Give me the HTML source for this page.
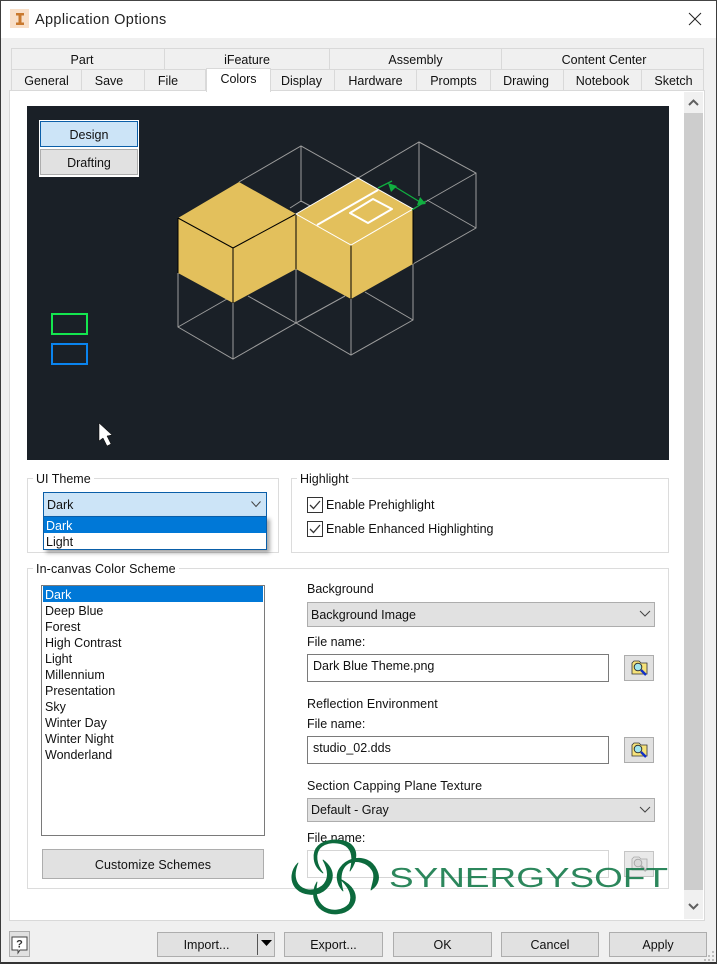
<!DOCTYPE html>
<html><head><meta charset="utf-8"><style>
html,body{margin:0;padding:0}
body{width:717px;height:964px;position:relative;overflow:hidden;background:#f0f0f0;font-family:"Liberation Sans",sans-serif;font-size:12.5px;color:#111}
div{position:absolute;box-sizing:border-box}
.t{white-space:nowrap;height:16px;line-height:16px;margin-top:1px}
.tab{border-right:1px solid #d9d9d9;text-align:center;white-space:nowrap;line-height:21px;padding-top:1px}
.b{background:#e1e1e1;border:1px solid #adadad;text-align:center;white-space:nowrap}
.g{border:1px solid #dcdcdc}
.lg{background:#fff;padding:0 3px 0 3px;height:16px;line-height:16px;white-space:nowrap}
.in{background:#fff;border:1px solid #7a7a7a}
.cb{background:#fff;border:1px solid #333;width:16px;height:16px}
</style></head><body>
<!-- window -->
<div style="left:0;top:0;width:717px;height:38px;background:#fff"></div>
<div style="left:35px;top:10px;font-size:14.5px;line-height:20px;letter-spacing:.35px;color:#222;white-space:nowrap">Application Options</div>
<svg style="position:absolute;left:10px;top:9px" width="20" height="20" viewBox="0 0 20 20"><rect width="19" height="19" fill="#f8dfc8"/><path d="M6 4h8v2.500h-2.500v7H14V16H6v-2.500h2.500v-7H6z" fill="#c9792e"/></svg>
<svg style="position:absolute;left:688px;top:12px" width="14" height="14" viewBox="0 0 14 14"><path d="M1 1l12 12M13 1L1 13" stroke="#222" stroke-width="1" fill="none"/></svg>
<!-- tabs upper -->
<div style="left:11px;top:48px;width:693px;height:22px;border:1px solid #d9d9d9;background:#f0f0f0"></div>
<div class="tab" style="left:12px;top:49px;width:153px;height:20px;padding-right:12px">Part</div>
<div class="tab" style="left:165px;top:49px;width:165px;height:20px">iFeature</div>
<div class="tab" style="left:330px;top:49px;width:172px;height:20px">Assembly</div>
<div class="tab" style="left:502px;top:49px;width:201px;height:20px;border-right:0;padding-left:3px">Content Center</div>
<!-- tabs lower -->
<div style="left:11px;top:70px;width:693px;height:21px;border-left:1px solid #d9d9d9;border-right:1px solid #d9d9d9;border-bottom:1px solid #d9d9d9"></div>
<div class="tab" style="left:12px;top:70px;width:70px;height:20px">General</div>
<div class="tab" style="left:82px;top:70px;width:63px;height:20px;padding-right:8px">Save</div>
<div class="tab" style="left:145px;top:70px;width:61px;height:20px;padding-right:14px">File</div>
<div class="tab" style="left:271px;top:70px;width:64px;height:20px;padding-right:2px">Display</div>
<div class="tab" style="left:335px;top:70px;width:82px;height:20px">Hardware</div>
<div class="tab" style="left:417px;top:70px;width:74px;height:20px">Prompts</div>
<div class="tab" style="left:491px;top:70px;width:73px;height:20px;padding-right:2px">Drawing</div>
<div class="tab" style="left:564px;top:70px;width:78px;height:20px">Notebook</div>
<div class="tab" style="left:642px;top:70px;width:61px;height:20px;border-right:0;padding-left:2px">Sketch</div>
<!-- panel -->
<div style="left:9px;top:90px;width:696px;height:831px;background:#fff;border:1px solid #d9d9d9"></div>
<div style="left:206px;top:68px;width:65px;height:24px;background:#fff;border:1px solid #d9d9d9;border-bottom:0;text-align:center;line-height:20px">Colors</div>
<!-- scrollbar -->
<div style="left:684px;top:92px;width:19px;height:827px;background:#f0f0f0"></div>
<div style="left:684px;top:113px;width:19px;height:777px;background:#cdcdcd"></div>
<svg style="position:absolute;left:684px;top:92px" width="19" height="21"><path d="M5 13l4.500-4.500L14 13" stroke="#606060" stroke-width="2" fill="none"/></svg>
<svg style="position:absolute;left:684px;top:897px" width="19" height="21"><path d="M5 7l4.500 4.500L14 7" stroke="#606060" stroke-width="2" fill="none"/></svg>
<!-- canvas -->
<div style="left:27px;top:106px;width:642px;height:354px;background:#1a2027"></div>
<div style="left:39px;top:120px;width:100px;height:57px;background:#fff"></div>
<div class="b" style="left:40px;top:121px;width:98px;height:26px;line-height:26px;background:#cce4f7;border:1px solid #0a5ea8">Design</div>
<div class="b" style="left:40px;top:149px;width:98px;height:26px;line-height:26px">Drafting</div>
<div style="left:51px;top:313px;width:37px;height:22px;border:2px solid #14e64f"></div>
<div style="left:51px;top:343px;width:37px;height:22px;border:2px solid #0a84ef"></div>
<svg style="position:absolute;left:0;top:0" width="717" height="964" viewBox="0 0 717 964">
<g fill="none" stroke="#9c9c9c" stroke-width="1">
<path d="M239 182L301 146L358 178L419 142L476 173V228L413 264"/>
<path d="M301 146V202M419 142V196M476 173L413 209M427 200L476 228M301 201L290 208M301 201L314 208"/>
<path d="M178 273V327L233 359L296 323L351 355L413 320V264"/>
<path d="M178 327L227 299M233 303V359M296 269V323M351 299V355M296 323L345 296M248 296L296 323M365 292L413 320"/>
</g>
<path d="M178 218L239 182L296 214L358 178L413 209V264L351 299L296 269L233 303L178 273Z" fill="#e3c05c"/>
<path d="M178 218L233 248L296 214M233 248V303M178 218V273M296 214V269M413 209V264M351 245V299" fill="none" stroke="#000" stroke-width="1"/>
<path d="M296 214L358 178L413 209L351 245Z" fill="none" stroke="#fff" stroke-width="1"/>
<path d="M317 225L378 190" stroke="#fff" stroke-width="2" fill="none"/>
<path d="M350 213L373 199L392 209L368 223Z" stroke="#fff" stroke-width="2" fill="none" stroke-linejoin="round"/>
<g stroke="#10b040" stroke-width="1.300" fill="none"><path d="M378 188L392 181M412 210L426 201M392 185L420 202"/></g>
<path d="M388 183L397 186L391 192ZM426 204L417 205L420 197Z" fill="#10b040"/>
<path d="M99 423V441L103 438L107 446L111 444L107 436L112 435Z" fill="#fff" stroke="#000" stroke-width=".5"/>
</svg>
<!-- UI theme -->
<div class="g" style="left:27px;top:478px;width:252px;height:75px"></div>
<div class="lg" style="left:33px;top:471px">UI Theme</div>
<div style="left:43px;top:492px;width:224px;height:25px;background:#cce4f7;border:1px solid #0a5ea8"></div>
<div class="t" style="left:47px;top:496px">Dark</div>
<svg style="position:absolute;left:250px;top:500px" width="12" height="9"><path d="M1.500 1.500L6 6.500L10.500 1.500" stroke="#444" fill="none"/></svg>
<div style="left:43px;top:516px;width:224px;height:34px;background:#fff;border:1px solid #0a5ea8;box-shadow:3px 3px 4px rgba(0,0,0,.35)"></div>
<div style="left:44px;top:517px;width:222px;height:16px;background:#0078d7"></div>
<div class="t" style="left:46px;top:517px;color:#fff">Dark</div>
<div class="t" style="left:46px;top:533px">Light</div>
<!-- highlight -->
<div class="g" style="left:291px;top:478px;width:378px;height:75px"></div>
<div class="lg" style="left:297px;top:471px">Highlight</div>
<div class="cb" style="left:307px;top:497px"></div>
<div class="cb" style="left:307px;top:521px"></div>
<svg style="position:absolute;left:307px;top:497px" width="16" height="40"><path d="M3 8l3.500 3.500L13 4M3 32l3.500 3.500L13 28" stroke="#333" stroke-width="1.300" fill="none"/></svg>
<div class="t" style="left:326px;top:496px">Enable Prehighlight</div>
<div class="t" style="left:326px;top:520px">Enable Enhanced Highlighting</div>
<!-- in canvas -->
<div class="g" style="left:27px;top:568px;width:642px;height:321px"></div>
<div class="lg" style="left:33px;top:561px;letter-spacing:.13px">In-canvas Color Scheme</div>
<div style="left:41px;top:585px;width:224px;height:251px;background:#fff;border:1px solid #7a7a7a"></div>
<div style="left:43px;top:586px;width:220px;height:16px;background:#0078d7"></div>
<div class="t" style="left:45px;top:586px;color:#fff">Dark</div>
<div class="t" style="left:45px;top:602px">Deep Blue</div>
<div class="t" style="left:45px;top:618px">Forest</div>
<div class="t" style="left:45px;top:634px">High Contrast</div>
<div class="t" style="left:45px;top:650px">Light</div>
<div class="t" style="left:45px;top:666px">Millennium</div>
<div class="t" style="left:45px;top:682px">Presentation</div>
<div class="t" style="left:45px;top:698px">Sky</div>
<div class="t" style="left:45px;top:714px">Winter Day</div>
<div class="t" style="left:45px;top:730px">Winter Night</div>
<div class="t" style="left:45px;top:746px">Wonderland</div>
<div class="b" style="left:42px;top:849px;width:222px;height:30px;line-height:30px;letter-spacing:.1px">Customize Schemes</div>
<div class="t" style="left:307px;top:580px">Background</div>
<div class="b" style="left:307px;top:602px;width:348px;height:25px"></div>
<div class="t" style="left:311px;top:606px">Background Image</div>
<div class="t" style="left:307px;top:633px">File name:</div>
<div class="in" style="left:307px;top:654px;width:302px;height:28px"></div>
<div class="t" style="left:313px;top:657px">Dark Blue Theme.png</div>
<div class="b" style="left:624px;top:655px;width:30px;height:26px"></div>
<div class="t" style="left:307px;top:695px;letter-spacing:.07px">Reflection Environment</div>
<div class="t" style="left:307px;top:715px">File name:</div>
<div class="in" style="left:307px;top:736px;width:302px;height:28px"></div>
<div class="t" style="left:313px;top:739px">studio_02.dds</div>
<div class="b" style="left:624px;top:737px;width:30px;height:26px"></div>
<div class="t" style="left:307px;top:777px;letter-spacing:.13px">Section Capping Plane Texture</div>
<div class="b" style="left:307px;top:798px;width:348px;height:24px"></div>
<div class="t" style="left:311px;top:801px">Default - Gray</div>
<div class="t" style="left:307px;top:829px">File name:</div>
<div style="left:307px;top:850px;width:302px;height:28px;background:#fff;border:1px solid #d5d5d5"></div>
<div class="b" style="left:624px;top:851px;width:30px;height:26px;opacity:.7"></div>
<svg style="position:absolute;left:0;top:0" width="717" height="964" viewBox="0 0 717 964">
<g fill="none" stroke="#444" stroke-width="1"><path d="M640 611L645 616L650 611M640 807L645 812L650 807"/></g>
<g transform="translate(631,660)"><path d="M1 3L3 1H8L10 3H16V14H1Z" fill="#f5e27a" stroke="#333" stroke-width=".8"/><circle cx="7" cy="7" r="3.800" fill="#9fe6ee" stroke="#333"/><path d="M10 10L15 15" stroke="#1230c8" stroke-width="2.500"/></g>
<g transform="translate(631,742)"><path d="M1 3L3 1H8L10 3H16V14H1Z" fill="#f5e27a" stroke="#333" stroke-width=".8"/><circle cx="7" cy="7" r="3.800" fill="#9fe6ee" stroke="#333"/><path d="M10 10L15 15" stroke="#1230c8" stroke-width="2.500"/></g>
<g transform="translate(631,856)" opacity=".55"><path d="M1 3L3 1H8L10 3H16V14H1Z" fill="#ddd" stroke="#777" stroke-width=".8"/><circle cx="7" cy="7" r="3.800" fill="#ccc" stroke="#777"/><path d="M10 10L15 15" stroke="#777" stroke-width="2.500"/></g>
</svg>
<!-- bottom -->
<div class="b" style="left:9px;top:931px;width:21px;height:26px"></div>
<svg style="position:absolute;left:9px;top:931px" width="21" height="26"><path d="M3 6H18V19H11L9 22V19H3Z" fill="#fff" stroke="#444"/><text x="10.500" y="16.500" font-family="Liberation Sans" font-weight="bold" font-size="11" fill="#333" text-anchor="middle">?</text></svg>
<div class="b" style="left:157px;top:932px;width:118px;height:25px;line-height:24px;padding-right:19px">Import...</div>
<div style="left:257px;top:934px;width:1px;height:21px;background:#555"></div>
<svg style="position:absolute;left:260px;top:938px" width="14" height="10"><path d="M1 2H12L6.500 8Z" fill="#000"/></svg>
<div class="b" style="left:284px;top:932px;width:99px;height:25px;line-height:24px">Export...</div>
<div class="b" style="left:393px;top:932px;width:99px;height:25px;line-height:24px">OK</div>
<div class="b" style="left:501px;top:932px;width:98px;height:25px;line-height:24px">Cancel</div>
<div class="b" style="left:609px;top:932px;width:98px;height:25px;line-height:24px">Apply</div>
<svg style="position:absolute;left:704px;top:950px" width="13" height="13"><g fill="#bdbdbd"><rect x="8" y="1" width="2" height="2"/><rect x="4" y="5" width="2" height="2"/><rect x="8" y="5" width="2" height="2"/><rect x="0" y="9" width="2" height="2"/><rect x="4" y="9" width="2" height="2"/><rect x="8" y="9" width="2" height="2"/></g></svg>
<!-- logo -->
<svg style="position:absolute;left:0;top:0" width="717" height="964" viewBox="0 0 717 964">
<g fill="#0c6a3d" stroke="#0c6a3d" stroke-width=".8" stroke-linejoin="round">
<path d="M323 873C312 866 312 852 318 846C325 839 340 838 349 843C358 849 358 860 350 871C353 860 353 851 346 846C338 841 326 842 320 848C315 854 316 864 323 873Z"/>
<path d="M298 863C291 870 290 880 295 887C302 896 318 897 326 889C334 881 336 870 323 860C329 871 329 880 322 886C314 892 303 891 298 884C294 878 295 870 298 863Z"/>
<path d="M343 891C337 885 335 875 340 868C346 859 358 856 367 860C376 864 380 875 378 881C377 885 374 888 371 890C372 884 376 876 372 870C367 862 356 860 349 863C342 867 339 876 343 891Z"/>
<path d="M317 882C311 892 313 904 322 910C331 916 344 915 351 908C358 900 358 888 340 879C350 888 353 897 349 904C343 911 331 912 324 907C316 901 315 892 317 882Z"/>
</g>
<text x="389" y="887" font-family="Liberation Sans" font-size="28" fill="#157a4a" fill-opacity=".9" textLength="279" lengthAdjust="spacingAndGlyphs">SYNERGYSOFT</text>
</svg>
<!-- window border -->
<div style="left:0;top:0;width:717px;height:964px;border:1px solid #3c3c3c;border-bottom:2px solid #333;border-top:1px solid #444"></div>
</body></html>
